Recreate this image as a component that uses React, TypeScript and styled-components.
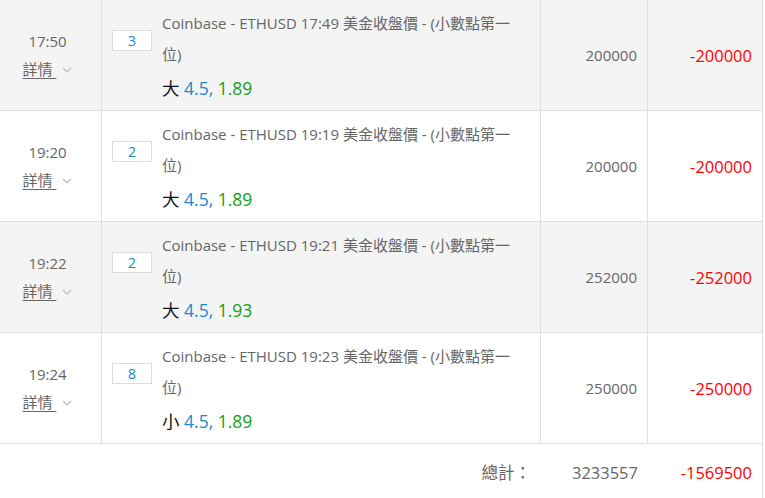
import styled, { createGlobalStyle } from 'styled-components'

const GlobalStyle = createGlobalStyle`
  html, body {
    margin: 0;
    padding: 0;
    background: #fff;
    overflow: hidden;
  }
  body {
    font-family: "Open Sans", "Noto Sans CJK TC", sans-serif;
    color: #666;
  }
`

const Table = styled.table`
  width: 763px;
  border-collapse: separate;
  border-spacing: 0;
  table-layout: fixed;
  font-size: 15px;
`

const Tr = styled.tr<{ $shaded?: boolean }>`
  background-color: ${p => (p.$shaded ? '#f4f4f4' : '#fff')};
`

const Td = styled.td`
  height: 110px;
  padding: 0;
  border-right: 1px solid #dedede;
  border-bottom: 1px solid #dedede;
  box-sizing: content-box;
`

const TimeCell = styled(Td)`
  width: 95px;
  padding-right: 6px;
  text-align: center;
  vertical-align: middle;
`

const TimeText = styled.div`
  line-height: 28px;
  font-size: 15px;
  color: #666;
`

const DetailLink = styled.a`
  display: inline-flex;
  align-items: center;
  line-height: 28px;
  color: #666;
  font-size: 15px;
  cursor: pointer;
`

const Underlined = styled.span`
  text-decoration: underline;
  text-underline-offset: 3px;
`

const Chevron = styled.svg`
  margin-left: 6px;
  margin-top: 1px;
`

const BetCell = styled(Td)`
  width: 428px;
  padding: 0 0 0 10px;
  vertical-align: top;
`

const BetBody = styled.div`
  display: flex;
  align-items: flex-start;
  gap: 10px;
  padding-top: 8px;
`

const Badge = styled.span`
  flex: none;
  width: 38px;
  height: 19px;
  margin-top: 22px;
  border: 1px solid #dcdcdc;
  background: #fff;
  color: #1a87d0;
  font-size: 14px;
  line-height: 19px;
  text-align: center;
`

const BetText = styled.div`
  width: 360px;
`

const Description = styled.div`
  line-height: 31px;
  font-size: 15px;
  color: #666;
`

const Odds = styled.div`
  margin-top: 2px;
  line-height: 32px;
  font-size: 17.5px;
`

const Side = styled.span`
  color: #111;
`

const Blue = styled.span`
  color: #1a87d0;
`

const Green = styled.span`
  color: #14a014;
`

const NumCell = styled(Td)<{ $w: number; $red?: boolean }>`
  width: ${p => p.$w}px;
  padding-right: 10px;
  text-align: right;
  vertical-align: middle;
  color: ${p => (p.$red ? '#ff0000' : '#666')};
  font-size: ${p => (p.$red ? '16.5px' : '15px')};
`

const FootCell = styled.td<{ $red?: boolean; $last?: boolean }>`
  height: 56px;
  padding: 0 10px 0 0;
  text-align: right;
  vertical-align: middle;
  font-size: 16.5px;
  color: ${p => (p.$red ? '#ff0000' : '#666')};
  border-right: ${p => (p.$last ? '1px solid #dedede' : 'none')};
`

interface Bet {
  time: string
  count: number
  quote: string
  side: string
  line: string
  odds: string
  stake: number
  result: number
}

const bets: Bet[] = [
  { time: '17:50', count: 3, quote: '17:49', side: '大', line: '4.5', odds: '1.89', stake: 200000, result: -200000 },
  { time: '19:20', count: 2, quote: '19:19', side: '大', line: '4.5', odds: '1.89', stake: 200000, result: -200000 },
  { time: '19:22', count: 2, quote: '19:21', side: '大', line: '4.5', odds: '1.93', stake: 252000, result: -252000 },
  { time: '19:24', count: 8, quote: '19:23', side: '小', line: '4.5', odds: '1.89', stake: 250000, result: -250000 },
]

function ChevronDown() {
  return (
    <Chevron width="10" height="6" viewBox="0 0 10 6">
      <polyline points="1,1 5,5 9,1" fill="none" stroke="#bbb" strokeWidth="1.2" />
    </Chevron>
  )
}

export default function App() {
  return (
    <>
      <GlobalStyle />
      <Table>
        <tbody>
          {bets.map((bet, i) => (
            <Tr key={i} $shaded={i % 2 === 0}>
              <TimeCell>
                <TimeText>{bet.time}</TimeText>
                <DetailLink>
                  <Underlined>詳情&nbsp;</Underlined>
                  <ChevronDown />
                </DetailLink>
              </TimeCell>
              <BetCell>
                <BetBody>
                  <Badge>{bet.count}</Badge>
                  <BetText>
                    <Description>
                      Coinbase - ETHUSD {bet.quote} 美金收盤價 - (小數點第一位)
                    </Description>
                    <Odds>
                      <Side>{bet.side}</Side> <Blue>{bet.line},</Blue> <Green>{bet.odds}</Green>
                    </Odds>
                  </BetText>
                </BetBody>
              </BetCell>
              <NumCell $w={96}>{bet.stake}</NumCell>
              <NumCell $w={104} $red>{bet.result}</NumCell>
            </Tr>
          ))}
          <Tr>
            <FootCell colSpan={2}>總計：</FootCell>
            <FootCell>3233557</FootCell>
            <FootCell $red $last>-1569500</FootCell>
          </Tr>
        </tbody>
      </Table>
    </>
  )
}
